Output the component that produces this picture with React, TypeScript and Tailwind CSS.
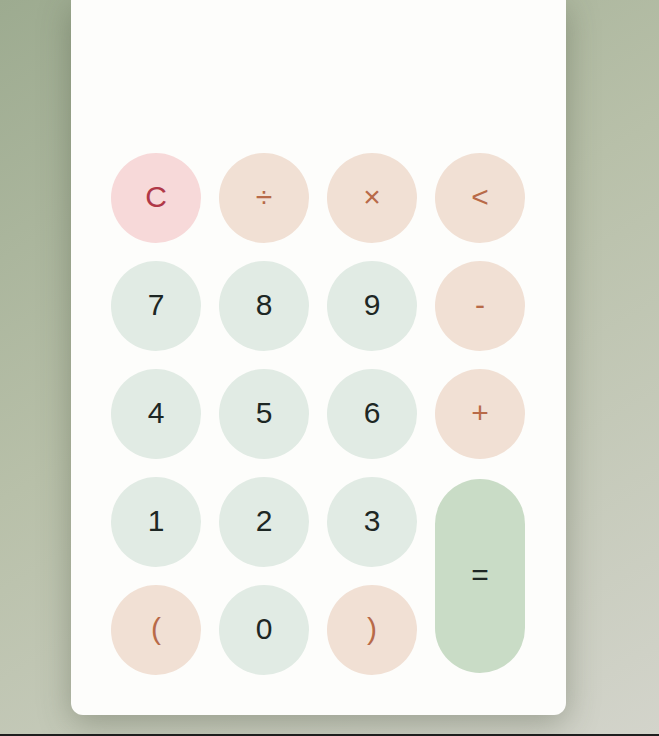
import React from "react";

type Kind = "clear" | "op" | "num" | "eq";

const styles: Record<Kind, string> = {
  clear: "bg-[#f7d9d9] text-[#b03848]",
  op: "bg-[#f1e0d4] text-[#b86a48]",
  num: "bg-[#e1ebe4] text-[#1d2724]",
  eq: "bg-[#c9dcc6] text-[#1d2724]",
};

const keys: { label: string; kind: Kind }[] = [
  { label: "C", kind: "clear" },
  { label: "÷", kind: "op" },
  { label: "×", kind: "op" },
  { label: "<", kind: "op" },
  { label: "7", kind: "num" },
  { label: "8", kind: "num" },
  { label: "9", kind: "num" },
  { label: "-", kind: "op" },
  { label: "4", kind: "num" },
  { label: "5", kind: "num" },
  { label: "6", kind: "num" },
  { label: "+", kind: "op" },
  { label: "1", kind: "num" },
  { label: "2", kind: "num" },
  { label: "3", kind: "num" },
  { label: "=", kind: "eq" },
  { label: "(", kind: "op" },
  { label: "0", kind: "num" },
  { label: ")", kind: "op" },
];

export default function App() {
  return (
    <div className="w-full h-[736px] flex flex-col overflow-hidden" style={{ fontFamily: '"Liberation Sans", Arial, sans-serif' }}>
      <div className="flex-1 bg-[linear-gradient(150deg,#9dab90_0%,#b8c0a9_45%,#d3d4cb_100%)] overflow-hidden">
        <div className="ml-[71px] w-[495px] h-[715px] bg-[#fdfdfb] rounded-b-[12px] shadow-[0_8px_32px_rgba(60,70,50,0.35)] pt-[153px] pl-[40px] pr-[41px] pb-[40px]">
          <div className="grid grid-cols-[repeat(4,90px)] grid-rows-[repeat(5,90px)] gap-[18px]">
            {keys.map((k) =>
              k.kind === "eq" ? (
                <button
                  key={k.label}
                  className={`row-span-2 my-[2px] pb-[4px] rounded-full flex items-center justify-center text-[30px] ${styles[k.kind]}`}
                >
                  {k.label}
                </button>
              ) : (
                <button
                  key={k.label}
                  className={`w-[90px] h-[90px] pb-[4px] rounded-full flex items-center justify-center text-[30px] ${styles[k.kind]}`}
                >
                  {k.label}
                </button>
              )
            )}
          </div>
        </div>
      </div>
      <div className="h-[2px] bg-[#1e1e1e]" />
    </div>
  );
}
